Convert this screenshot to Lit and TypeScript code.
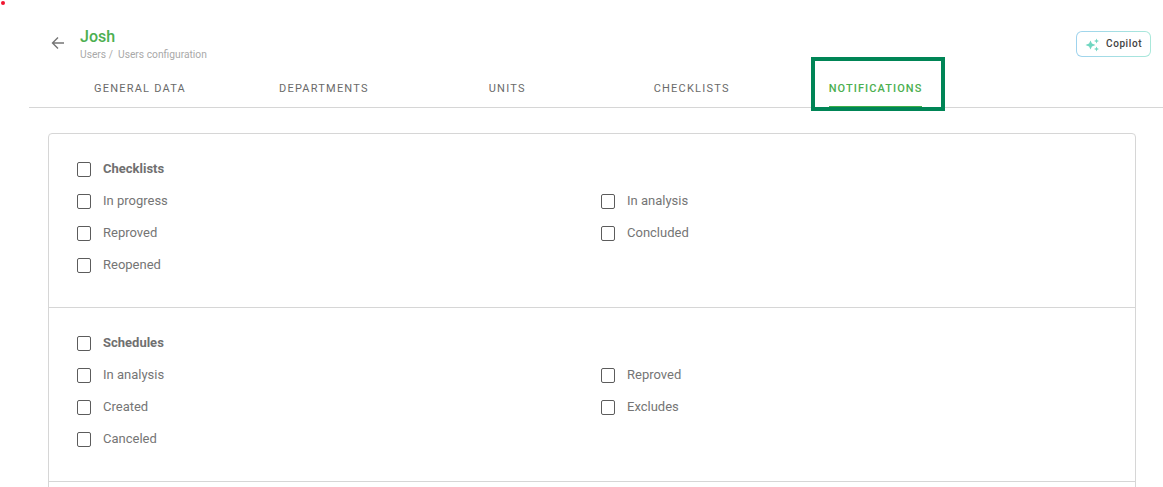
import { LitElement, html, css } from 'lit';
import { customElement } from 'lit/decorators.js';

interface Section {
  title: string;
  left: string[];
  right: string[];
}

const TABS = [
  { label: 'GENERAL DATA', gap: 0 },
  { label: 'DEPARTMENTS', gap: 93 },
  { label: 'UNITS', gap: 120 },
  { label: 'CHECKLISTS', gap: 128 },
  { label: 'NOTIFICATIONS', gap: 99, active: true },
];

const SECTIONS: Section[] = [
  { title: 'Checklists', left: ['In progress', 'Reproved', 'Reopened'], right: ['In analysis', 'Concluded'] },
  { title: 'Schedules', left: ['In analysis', 'Created', 'Canceled'], right: ['Reproved', 'Excludes'] },
  { title: '', left: [], right: [] },
];

@customElement('app-root')
export class AppRoot extends LitElement {
  static styles = css`
    :host {
      display: block;
      position: relative;
      height: 487px;
      overflow: hidden;
      background: #fff;
      font-family: Roboto, sans-serif;
      color: #757575;
    }

    .dot {
      position: absolute;
      left: 1px;
      top: 1px;
      width: 4px;
      height: 4px;
      border-radius: 50%;
      background: #f0142f;
    }

    .header {
      display: flex;
      justify-content: space-between;
      padding: 27px 12px 0 50px;
      height: 43px;
    }

    .title-group {
      display: flex;
      gap: 14px;
    }

    .back {
      width: 16px;
      height: 16px;
      margin-top: 8px;
      color: #757575;
    }

    .name {
      font-size: 16px;
      line-height: 19px;
      font-weight: 500;
      color: #4caf50;
    }

    .crumbs {
      font-size: 10.25px;
      line-height: 11px;
      margin-top: 3px;
      color: #a9a9a9;
      white-space: pre;
    }

    .copilot {
      display: flex;
      align-items: center;
      gap: 6px;
      box-sizing: border-box;
      width: 75px;
      height: 26px;
      margin-top: 4px;
      padding-left: 8px;
      border: 1px solid transparent;
      border-radius: 6px;
      background:
        linear-gradient(#fff, #fff) padding-box,
        linear-gradient(90deg, #9fd3ee, #a9e8da) border-box;
      font-size: 10px;
      font-weight: 500;
      letter-spacing: 0.6px;
      color: #424242;
    }

    .copilot svg {
      width: 15px;
      height: 14px;
      margin-top: 1px;
    }

    .copilot span {
      margin-top: -2px;
    }

    .tabs {
      display: flex;
      margin-left: 29px;
      padding-left: 65px;
      height: 37px;
      border-bottom: 1px solid #d6d6d6;
    }

    .tab {
      position: relative;
      box-sizing: border-box;
      height: 37px;
      padding-top: 12px;
      font-size: 11px;
      line-height: 14px;
      font-weight: 400;
      letter-spacing: 1.22px;
      color: #6a6a6a;
      white-space: nowrap;
    }

    .tab.active {
      color: #4caf50;
      font-weight: 500;
      letter-spacing: 1.08px;
    }

    .tab.active::after {
      content: '';
      position: absolute;
      left: 0;
      right: 0;
      bottom: -1px;
      height: 2px;
      background: #3fae49;
    }

    .highlight {
      position: absolute;
      left: 811px;
      top: 57px;
      width: 134px;
      height: 54px;
      box-sizing: border-box;
      border: 4px solid #008556;
    }

    .card {
      box-sizing: border-box;
      margin: 25px 27px 0 48px;
      border: 1px solid #d6d6d6;
      border-radius: 4px;
    }

    .section {
      padding: 19px 28px 26px;
      height: 174px;
      box-sizing: border-box;
      border-bottom: 1px solid #d6d6d6;
    }

    .check-row {
      display: flex;
      align-items: center;
      gap: 12px;
      height: 32px;
      font-size: 13px;
    }

    .check-row span:last-child {
      margin-top: -2px;
    }

    .check-row.title {
      font-weight: 700;
      color: #707070;
    }

    .box {
      box-sizing: border-box;
      width: 14px;
      height: 15px;
      border: 1px solid #5c5c5c;
      border-radius: 2px;
    }

    .columns {
      display: grid;
      grid-template-columns: 524px 1fr;
    }
  `;

  private renderCheck(label: string, title = false) {
    return html`<div class="check-row ${title ? 'title' : ''}"><span class="box"></span><span>${label}</span></div>`;
  }

  render() {
    return html`
      <div class="dot"></div>
      <div class="header">
        <div class="title-group">
          <svg class="back" viewBox="0 0 16 16" fill="none" stroke="currentColor" stroke-width="1.4">
            <path d="M14 8H2.5M8 2.5 2.5 8 8 13.5" />
          </svg>
          <div>
            <div class="name">Josh</div>
            <div class="crumbs">Users /  Users configuration</div>
          </div>
        </div>
        <div class="copilot">
          <svg viewBox="0 0 15 14" fill="#6fd6c0">
            <path d="M5.5 2.5 6.9 5.6 10.5 7 6.9 8.4 5.5 11.5 4.1 8.4 0.5 7 4.1 5.6Z" />
            <path d="M11.5 0.5 12.2 2.3 14 3 12.2 3.7 11.5 5.5 10.8 3.7 9 3 10.8 2.3Z" />
            <path d="M11.5 8.5 12.2 10.3 14 11 12.2 11.7 11.5 13.5 10.8 11.7 9 11 10.8 10.3Z" />
          </svg>
          <span>Copilot</span>
        </div>
      </div>
      <div class="tabs">
        ${TABS.map(
          (t) => html`<div class="tab ${t.active ? 'active' : ''}" style="margin-left:${t.gap}px">${t.label}</div>`
        )}
      </div>
      <div class="highlight"></div>
      <div class="card">
        ${SECTIONS.map(
          (s) => html`<div class="section">
            ${s.title ? this.renderCheck(s.title, true) : ''}
            <div class="columns">
              <div>${s.left.map((l) => this.renderCheck(l))}</div>
              <div>${s.right.map((l) => this.renderCheck(l))}</div>
            </div>
          </div>`
        )}
      </div>
    `;
  }
}
